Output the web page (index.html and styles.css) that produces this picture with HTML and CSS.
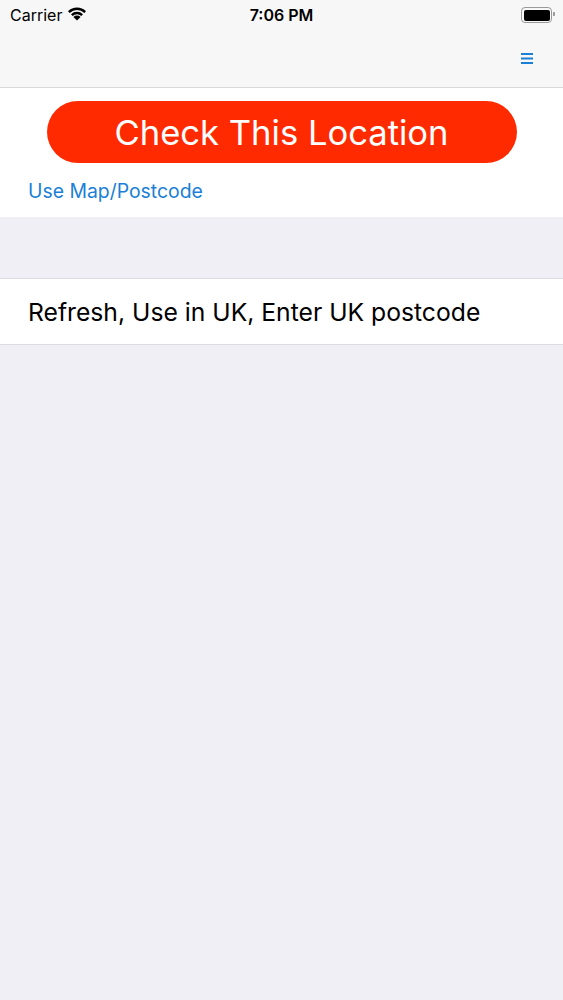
FILE: index.html
```html
<!DOCTYPE html>
<html lang="en">
<head>
<meta charset="UTF-8">
<meta name="viewport" content="width=device-width, initial-scale=1.0">
<title>Check This Location</title>
<link rel="stylesheet" href="styles.css">
</head>
<body>
<div class="top">
  <div class="status">
    <div class="carrier">
      Carrier
      <svg class="wifi" width="20" height="15" viewBox="0 0 20 15">
        <path d="M10 14.5 L6.4 10.9 A5.2 5.2 0 0 1 13.6 10.9 Z" fill="#000"/>
        <path d="M4 8.3 A8.6 8.6 0 0 1 16 8.3 L14.3 10 A6.2 6.2 0 0 0 5.7 10 Z" fill="#000"/>
        <path d="M1 5.3 A12.8 12.8 0 0 1 19 5.3 L17.3 7 A10.4 10.4 0 0 0 2.7 7 Z" fill="#000"/>
      </svg>
    </div>
    <div class="clock">7:06 PM</div>
    <div class="battery"><span class="level"></span></div>
  </div>
  <div class="navbar">
    <svg class="menu" width="12" height="11" viewBox="0 0 12 11">
      <rect x="0" y="0" width="12" height="2" fill="#1a7fd6"/>
      <rect x="0" y="4.5" width="12" height="2" fill="#1a7fd6"/>
      <rect x="0" y="9" width="12" height="2" fill="#1a7fd6"/>
    </svg>
  </div>
</div>

<div class="panel">
  <button class="check">Check This Location</button>
  <a class="link" href="#">Use Map/Postcode</a>
</div>

<div class="spacer"></div>

<div class="row">Refresh, Use in UK, Enter UK postcode</div>
</body>
</html>
```

FILE: styles.css
```css
body {
  margin: 0;
  padding: 0;
  font-family: Inter, "Liberation Sans", Arial, sans-serif;
  background-color: #f0eff5;
  min-height: 100vh;
}

.top {
  background-color: #f7f7f7;
  border-bottom: 1px solid #d8d8d8;
}

.status {
  height: 30px;
  display: flex;
  align-items: center;
  justify-content: space-between;
  padding: 0 10px;
  position: relative;
  font-size: 16px;
  color: #000;
}

.carrier {
  display: flex;
  align-items: center;
  gap: 5px;
}

.wifi {
  margin-top: -4px;
}

.clock {
  position: absolute;
  left: 0;
  right: 0;
  text-align: center;
  font-weight: 600;
  pointer-events: none;
}

.battery {
  width: 26px;
  height: 11px;
  border: 1.5px solid #9a9a9a;
  border-radius: 4px;
  padding: 1.5px;
  position: relative;
  margin-right: 1px;
}

.battery::after {
  content: "";
  position: absolute;
  right: -4px;
  top: 4px;
  width: 2px;
  height: 4px;
  background-color: #9a9a9a;
  border-radius: 0 1px 1px 0;
}

.level {
  display: block;
  width: 100%;
  height: 100%;
  background-color: #000;
  border-radius: 2px;
}

.navbar {
  height: 57px;
  display: flex;
  align-items: center;
  justify-content: flex-end;
  padding-right: 30px;
}

.menu {
  margin-top: -1px;
}

.panel {
  background-color: #fff;
  padding: 13px 0 14px;
  display: flex;
  flex-direction: column;
}

.check {
  display: block;
  margin: 0 auto;
  width: 470px;
  height: 62px;
  border: none;
  border-radius: 31px;
  background-color: #ff2a00;
  color: #fff;
  font-family: Inter, "Liberation Sans", Arial, sans-serif;
  font-size: 34.6px;
  cursor: pointer;
  padding: 0;
}

.link {
  margin: 16px 0 0 28px;
  color: #1a7fd6;
  font-size: 19.4px;
  text-decoration: none;
}

.spacer {
  height: 61px;
}

.row {
  background-color: #fff;
  border-top: 1px solid #dcdbe0;
  border-bottom: 1px solid #dcdbe0;
  height: 65px;
  display: flex;
  align-items: center;
  padding-left: 28px;
  font-size: 24.7px;
  color: #000;
}
```
